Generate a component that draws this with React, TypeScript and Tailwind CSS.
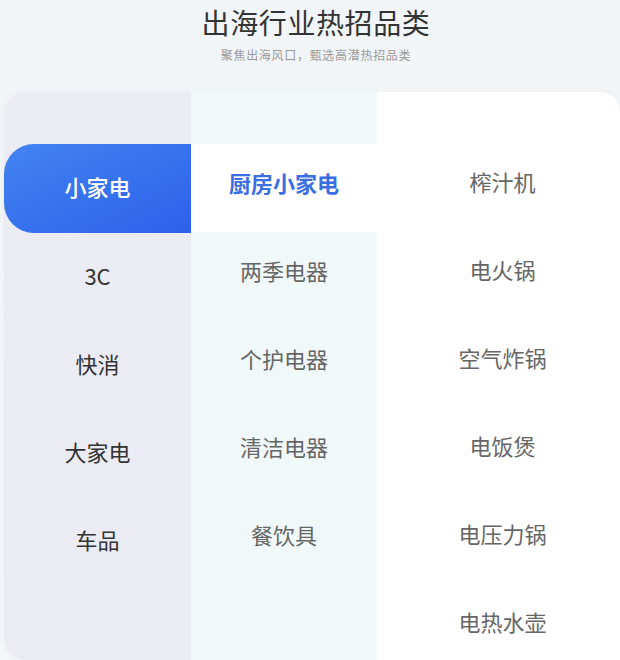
const left = ["小家电", "3C", "快消", "大家电", "车品"];
const middle = ["厨房小家电", "两季电器", "个护电器", "清洁电器", "餐饮具"];
const right = ["榨汁机", "电火锅", "空气炸锅", "电饭煲", "电压力锅", "电热水壶"];

export default function App() {
  const font = { fontFamily: '"Noto Sans CJK SC", "Noto Sans", sans-serif' };

  return (
    <div
      className="w-[620px] h-[660px] overflow-hidden bg-gradient-to-b from-[#f2f5f7] to-[#f4f7f9]"
      style={font}
    >
      <div className="flex flex-col items-center pt-[3px] pl-[12px]">
        <h1 className="text-[28px] leading-[38px] text-[#333] tracking-[0.6px]">出海行业热招品类</h1>
        <p className="mt-[5px] text-[12px] leading-[18px] text-[#9a9a9a] tracking-[0.7px]">聚焦出海风口，甄选高潜热招品类</p>
      </div>

      <div className="ml-[4px] mt-[28px] h-[568px] flex rounded-tl-[22px] rounded-bl-[22px] rounded-tr-[20px] overflow-hidden shadow-[0_0_6px_rgba(0,0,0,0.03)]">
        {/* primary categories */}
        <div className="w-[187px] shrink-0 bg-[#ebebf3] pt-[52px]">
          {left.map((name, i) => (
            <div
              key={name}
              className={
                i === 0
                  ? "h-[89px] flex items-center justify-center pb-[4px] rounded-l-[30px] bg-gradient-to-br from-[#4384f1] to-[#2e60eb] text-white text-[22px] font-medium"
                  : "h-[88px] flex items-center justify-center pb-[4px] text-[#333] text-[22px]"
              }
            >
              {name}
            </div>
          ))}
        </div>

        {/* secondary categories */}
        <div className="w-[186px] shrink-0 bg-[#f1f8f9] pt-[52px]">
          {middle.map((name, i) => (
            <div
              key={name}
              className={
                i === 0
                  ? "h-[88px] flex items-center justify-center pb-[12px] bg-white text-[#3a6ee2] text-[22px] font-bold"
                  : "h-[88px] flex items-center justify-center pb-[12px] text-[#666] text-[22px]"
              }
            >
              {name}
            </div>
          ))}
        </div>

        {/* products */}
        <div className="flex-1 bg-white pt-[52px] pl-[8px]">
          {right.map((name) => (
            <div key={name} className="h-[88px] flex items-center justify-center pb-[14px] text-[#666] text-[22px]">
              {name}
            </div>
          ))}
        </div>
      </div>
    </div>
  );
}
